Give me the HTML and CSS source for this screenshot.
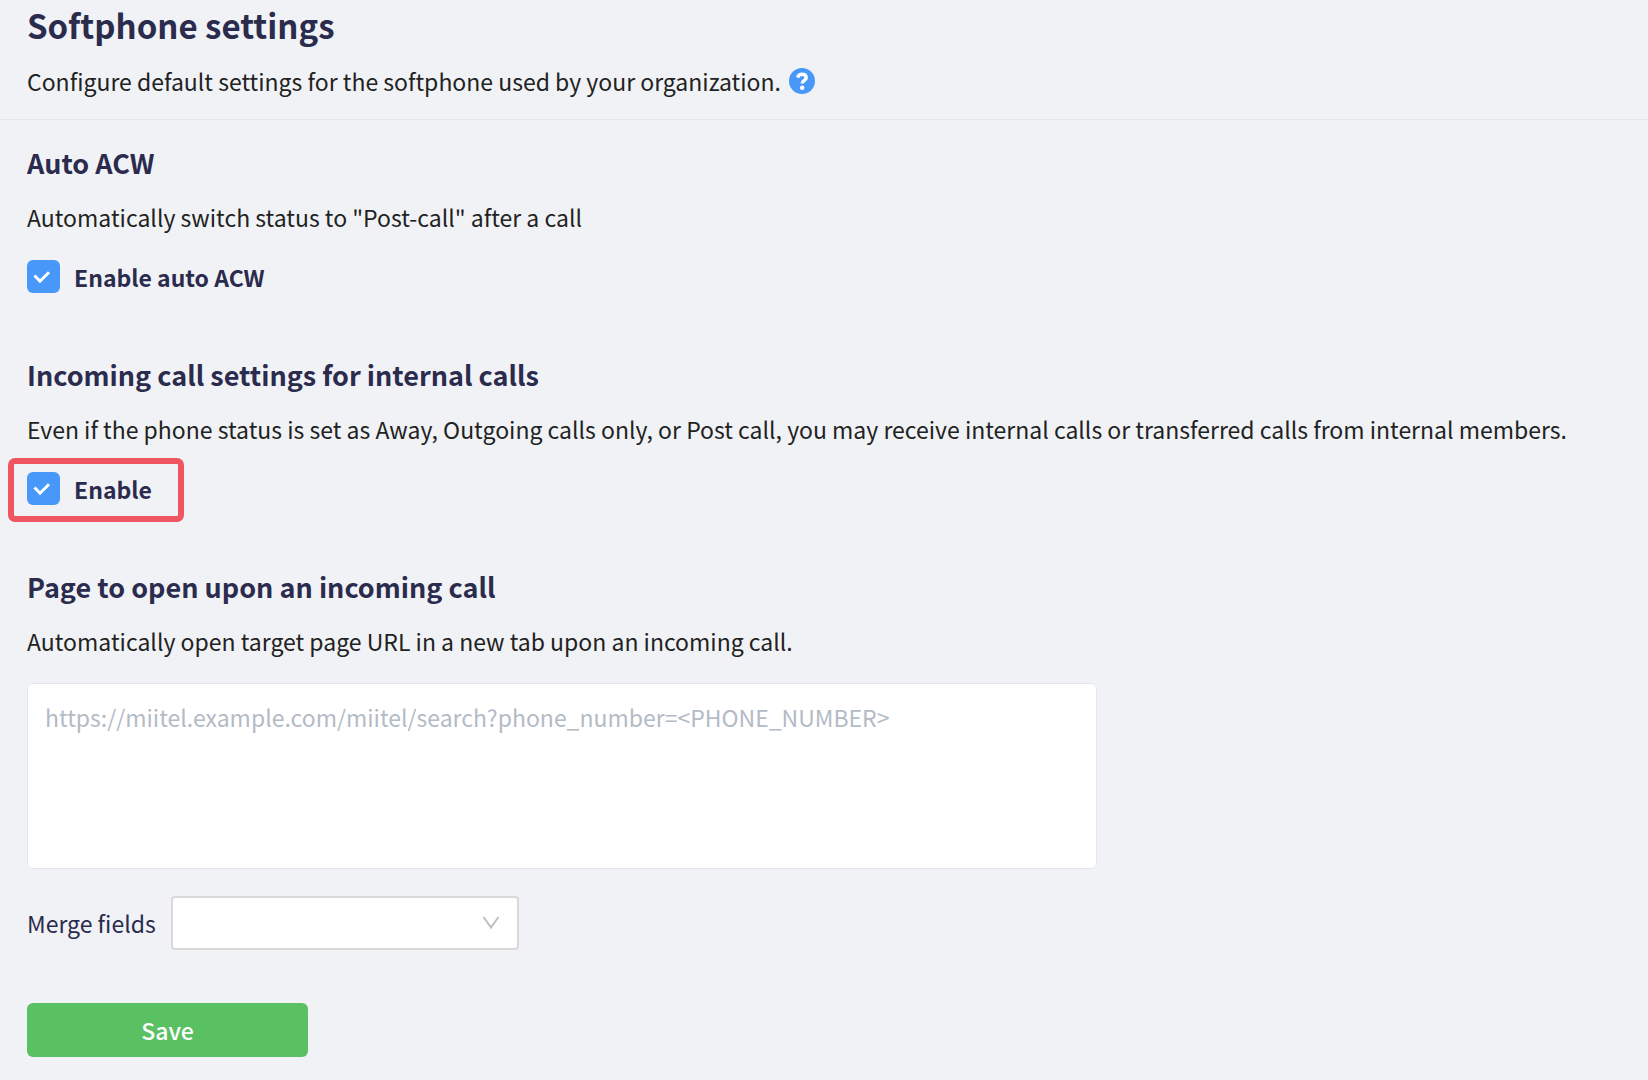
FILE: index.html
```html
<!DOCTYPE html>
<html lang="en">
    <head>
        <meta charset="utf-8">
        <title>Softphone settings</title>
        <link rel="stylesheet" href="styles.css">
    </head>
    <body>
        <header class="page-header">
            <h1>Softphone settings</h1>
            <p>Configure default settings for the softphone used by your organization.
                <a class="help" href="#" aria-label="Help">
                    <svg viewBox="0 0 26 26" width="26" height="26">
                        <circle cx="13" cy="13" r="13" fill="#4798f8"/>
                        <path d="M8.500 9.500C9.500 7.300 11 6.300 13 6.300C15.600 6.300 17.200 7.700 17.200 9.700C17.200 12.300 13.200 12.400 13.200 15.500" fill="none" stroke="#fff" stroke-width="3.500"/>
                        <circle cx="13.200" cy="19.700" r="2.300" fill="#fff"/>
                    </svg>
                </a>
            </p>
        </header>
        <form id="settings">
            <section>
                <h2>Auto ACW</h2>
                <p>Automatically switch status to "Post-call" after a call</p>
                <label class="check">
                    <span class="box">
                        <input type="checkbox" id="autoAcw" checked>
                        <svg viewBox="0 0 33 33" width="33" height="33"><path d="M7.500 15.500L13 21.200L22 12.200"/></svg>
                    </span>
                    Enable auto ACW
                </label>
            </section>
            <section>
                <h2>Incoming call settings for internal calls</h2>
                <p>Even if the phone status is set as Away, Outgoing calls only, or Post call, you may receive internal calls or transferred calls from internal members.</p>
                <label class="check marked">
                    <span class="box">
                        <input type="checkbox" id="internalCalls" checked>
                        <svg viewBox="0 0 33 33" width="33" height="33"><path d="M7.500 15.500L13 21.200L22 12.200"/></svg>
                    </span>
                    Enable
                </label>
            </section>
            <section>
                <h2>Page to open upon an incoming call</h2>
                <p id="urlText">Automatically open target page URL in a new tab upon an incoming call.</p>
                <textarea id="url" aria-labelledby="urlText" placeholder="https://miitel.example.com/miitel/search?phone_number=&lt;PHONE_NUMBER&gt;"></textarea>
                <div class="merge">
                    <label for="mergeFields">Merge fields</label>
                    <div class="select">
                        <select id="mergeFields">
                            <option value=""></option>
                        </select>
                        <svg viewBox="0 0 18 14" width="18" height="14"><path d="M1.500 1L9 11.500L16.500 1"/></svg>
                    </div>
                </div>
                <button type="submit" class="save">Save</button>
            </section>
        </form>
    </body>
</html>
```
FILE: styles.css
```css
*{box-sizing: border-box;}
body{margin: 0; background: #f0f2f6; color: #222; font-family: "Noto Sans CJK JP", sans-serif; font-size: 23px; line-height: 48px;}
h1,h2,p{margin: 0;}
h1,h2{color: #2b2b4d; font-weight: 700;}
h1{font-size: 33px; line-height: 48px; margin-bottom: 8px;}
h2{font-size: 27px; line-height: 40px; margin-bottom: 10px;}

.page-header{padding: 1px 27px 14px; border-bottom: 1px solid #e5e6ea;}
.page-header p{display: flex; align-items: center; gap: 8px;}
.help{display: flex;}

section{padding: 23px 27px 39px;}

.check{display: flex; align-items: center; gap: 14px; width: fit-content; height: 33px; margin-top: 19px; color: #2b2b4d; font-weight: 700;}
.box{display: grid;}
.box input,.box svg{grid-area: 1 / 1;}
.box input{appearance: none; width: 33px; height: 33px; margin: 0; border-radius: 6px; background: #fff;}
.box input:checked{background: #4798f8;}
.box svg{pointer-events: none; fill: none; stroke: #fff; stroke-width: 3;}

/* red frame around the option */
.marked{position: relative;}
.marked::after{content: ""; position: absolute; inset: -14px -32px -17px -19px; border: 6px solid #ef5662; border-radius: 7px;}

textarea{display: block; width: 100%; max-width: 1070px; height: 186px; margin-top: 18px; padding: 9px 17px; border: 1px solid #e5e6ea; border-radius: 6px; background: #fff; font: inherit; resize: none;}
textarea::placeholder{color: #b3bbc6; opacity: 1;}

.merge{display: flex; align-items: center; gap: 15px; margin: 27px 0 53px; color: #2b2b4d;}
.select{display: grid; align-items: center;}
.select select,.select svg{grid-area: 1 / 1;}
.select select{appearance: none; width: 348px; height: 54px; border: 2px solid #d9d9d9; border-radius: 4px; background: #fff; font: inherit;}
.select svg{justify-self: end; margin-right: 19px; pointer-events: none; fill: none; stroke: #bfbfbf; stroke-width: 2;}

section:last-child{padding-bottom: 20px;}
.save{display: block; width: 281px; height: 54px; padding: 0; border: none; border-radius: 6px; background: #59c161; color: #fff; font: inherit; font-weight: 500;}
```
